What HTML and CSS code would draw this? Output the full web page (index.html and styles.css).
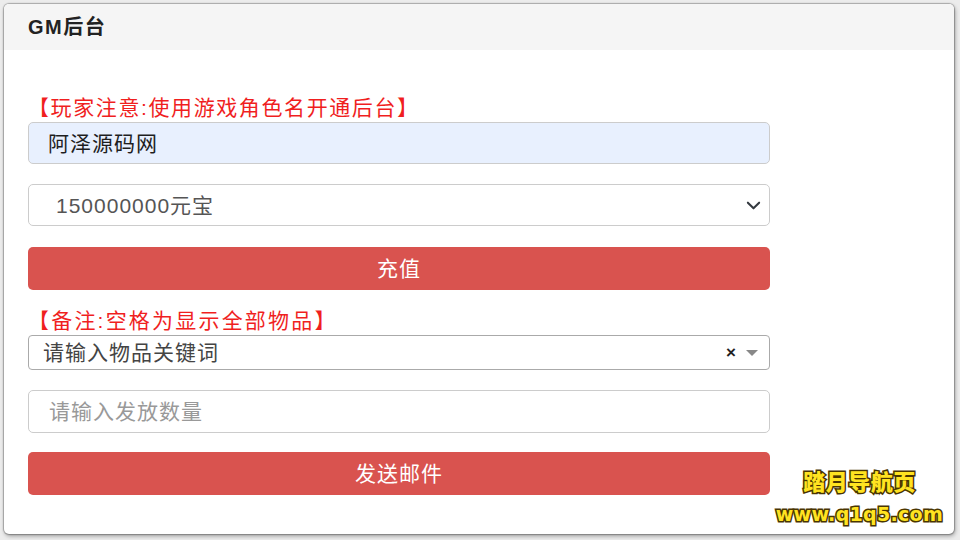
FILE: index.html
```html
<!DOCTYPE html>
<html lang="zh-CN">
<head>
<meta charset="utf-8">
<title>GM后台</title>
<link rel="stylesheet" href="styles.css">
</head>
<body>
<div class="card">
  <div class="card-header">GM后台</div>
  <div class="card-body">
    <div class="note note-first">【玩家注意:使用游戏角色名开通后台】</div>
    <div class="field field-filled">阿泽源码网</div>
    <div class="field field-select">
      <span class="select-text">150000000元宝</span>
      <svg class="chev" viewBox="0 0 16 16" width="15" height="15"><path d="M2 5l6 6 6-6" fill="none" stroke="#343a40" stroke-width="2.2" stroke-linecap="round" stroke-linejoin="round"/></svg>
    </div>
    <div class="btn">充值</div>
    <div class="note note-second">【备注:空格为显示全部物品】</div>
    <div class="select2">
      <span class="s2-text">请输入物品关键词</span>
      <span class="s2-clear">×</span>
      <span class="s2-arrow"></span>
    </div>
    <div class="field field-empty">请输入发放数量</div>
    <div class="btn btn-send">发送邮件</div>
  </div>
</div>
<div class="watermark">
  <div class="wm-title">踏月导航页</div>
  <div class="wm-url">www.q1q5.com</div>
</div>
</body>
</html>
```
FILE: styles.css
```css
html, body {
  margin: 0;
  padding: 0;
}
body {
  width: 960px;
  height: 540px;
  background: #ececec;
  font-family: "Liberation Sans", "Noto Sans CJK SC", sans-serif;
  padding: 4px 6px 6px 4px;
  box-sizing: border-box;
  overflow: hidden;
  position: relative;
}
.card {
  background: #fff;
  width: 950px;
  height: 530px;
  border-radius: 5px;
  box-shadow: 0 0 1px 1px rgba(0,0,0,0.25), 1px 2px 4px rgba(0,0,0,0.35);
  overflow: hidden;
  display: flex;
  flex-direction: column;
}
.card-header {
  box-sizing: border-box;
  height: 46px;
  background: #f5f5f5;
  padding-left: 24px;
  padding-top: 1px;
  font-size: 20px;
  letter-spacing: 1.5px;
  font-weight: bold;
  color: #222;
  line-height: 44px;
}
.card-body {
  width: 742px;
  padding-left: 24px;
  display: flex;
  flex-direction: column;
}
.note {
  color: #f01f1f;
  font-size: 21px;
  letter-spacing: 1.6px;
  line-height: 24px;
}
.note-first { margin-top: 46px; }
.note-second { margin-top: 19px; letter-spacing: 2.2px; }
.field {
  box-sizing: border-box;
  height: 42px;
  border: 1px solid #ccc;
  border-radius: 5px;
  font-size: 21px;
  letter-spacing: 1px;
  display: flex;
  align-items: center;
  padding-bottom: 3px;
}
.field-filled {
  margin-top: 2px;
  background: #e8f0fe;
  padding-left: 19px;
  color: #1e1e1e;
}
.field-select {
  margin-top: 20px;
  padding-left: 27px;
  padding-right: 8px;
  color: #555;
  justify-content: space-between;
}
.chev { display: block; margin-top: 3px; }
.btn {
  box-sizing: border-box;
  margin-top: 21px;
  height: 43px;
  border-radius: 5px;
  background: #d9534f;
  color: #fff;
  font-size: 21px;
  letter-spacing: 1px;
  display: flex;
  align-items: center;
  justify-content: center;
  padding-bottom: 4px;
}
.btn-send { margin-top: 19px; }
.select2 {
  margin-top: 2px;
  box-sizing: border-box;
  height: 35px;
  border: 1px solid #aaa;
  border-radius: 4px;
  display: flex;
  align-items: center;
  padding-left: 14px;
  padding-right: 11px;
  padding-bottom: 3px;
  font-size: 21px;
  letter-spacing: 1px;
  color: #444;
}
.s2-text { flex: 1; }
.s2-clear {
  font-size: 17px;
  font-weight: bold;
  color: #222;
  margin-right: 9px;
  margin-top: 3px;
  line-height: 1;
}
.s2-arrow {
  width: 0;
  height: 0;
  margin-top: 3px;
  border-left: 6px solid transparent;
  border-right: 6px solid transparent;
  border-top: 6px solid #888;
}
.field-empty {
  margin-top: 20px;
  height: 43px;
  padding-left: 20px;
  color: #999;
}
.watermark {
  position: absolute;
  right: 17px;
  bottom: 14px;
  display: flex;
  flex-direction: column;
  align-items: center;
  color: #ffe321;
  font-weight: 900;
  -webkit-text-stroke: 3px #4a3500;
  paint-order: stroke fill;
}
.wm-title {
  font-family: "Noto Sans CJK SC", sans-serif;
  font-size: 22px;
  line-height: 26px;
  font-weight: 900;
  letter-spacing: 0.5px;
  margin-bottom: 9px;
}
.wm-url {
  font-family: "DejaVu Sans", sans-serif;
  font-size: 19px;
  line-height: 24px;
  font-weight: bold;
  letter-spacing: 0.3px;
}
```
